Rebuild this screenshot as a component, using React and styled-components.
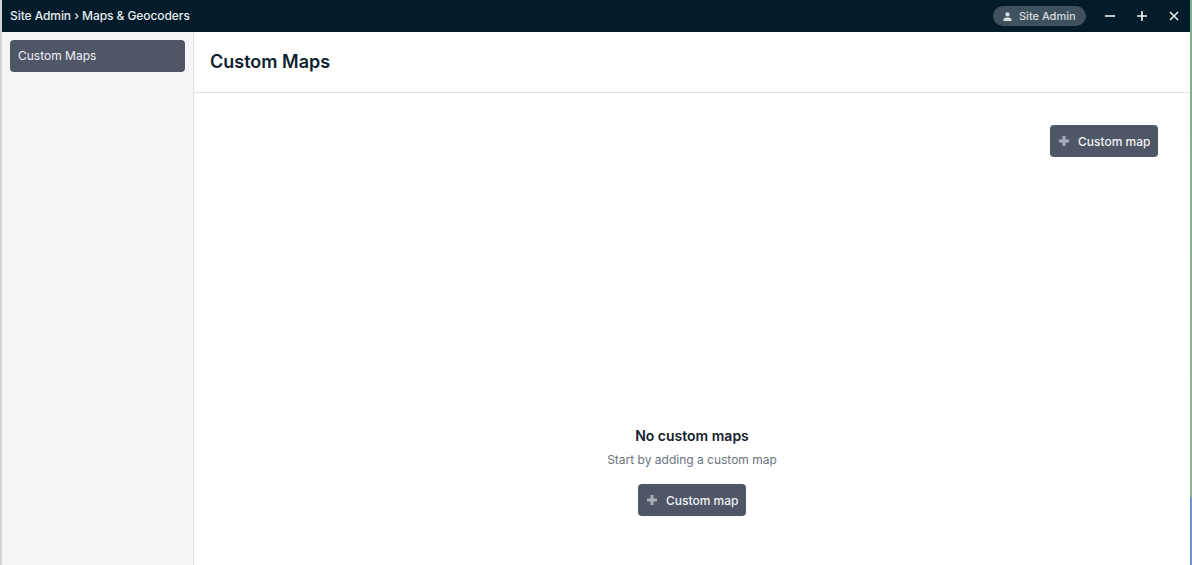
import React from "react";
import styled, { createGlobalStyle } from "styled-components";

const GlobalStyle = createGlobalStyle`
	html, body {
		margin: 0;
		padding: 0;
		height: 100%;
		overflow: hidden;
		background: #7fae8c;
	}
	* {
		box-sizing: border-box;
	}
	#root {
		height: 100%;
	}
`;

//  //  //  STYLED-COMPONENTS   //  //  //

const Desktop = styled.div`
	width: 1192px;
	height: 565px;
	display: flex;
	font-family: Inter, "Liberation Sans", sans-serif;
	background: linear-gradient(180deg, #7fae8c 0%, #8fb596 88%, #6f93d0 88%, #6f93d0 100%);
`;

const DesktopEdge = styled.div`
	width: 2px;
	background: #d4d4d6;
`;

const Window = styled.div`
	width: 1188px;
	display: flex;
	flex-direction: column;
	background: #fff;
`;

const TitleBar = styled.header`
	height: 32px;
	flex: none;
	display: flex;
	align-items: center;
	justify-content: space-between;
	padding: 0 0 0 8px;
	background: #031c2b;
	color: #e9ecef;
`;

const Breadcrumb = styled.div`
	font-size: 12px;
	font-weight: 500;
	letter-spacing: -0.07px;
	padding-bottom: 1px;
`;

const TitleActions = styled.div`
	display: flex;
	align-items: center;
`;

const UserPill = styled.div`
	width: 93px;
	height: 20px;
	margin-right: 8px;
	display: flex;
	align-items: center;
	gap: 7px;
	padding-left: 10px;
	border-radius: 10px;
	background: #3f515c;
	color: #d8dde0;
	font-size: 11px;
	font-weight: 500;
`;

const WindowButton = styled.button`
	width: 32px;
	height: 24px;
	padding: 0;
	display: flex;
	align-items: center;
	justify-content: center;
	border: 0;
	background: none;
	color: #f1f3f5;
`;

const Body = styled.div`
	flex: 1;
	min-height: 0;
	display: flex;
`;

const Sidebar = styled.nav`
	width: 192px;
	flex: none;
	padding: 8px;
	background: #f5f5f8;
	border-right: 1px solid #e2e4ea;
`;

const SidebarItem = styled.div`
	width: 175px;
	height: 32px;
	display: flex;
	align-items: center;
	padding: 0 0 1px 8px;
	border-radius: 4px;
	background: #4f5766;
	color: #eef0f3;
	font-size: 12px;
`;

const Main = styled.main`
	flex: 1;
	min-width: 0;
	display: flex;
	flex-direction: column;
`;

const PageHeader = styled.div`
	height: 61px;
	flex: none;
	display: flex;
	align-items: center;
	padding: 0 16px 2px;
	border-bottom: 1px solid #dfe2e8;
`;

const PageTitle = styled.h1`
	margin: 0;
	color: #0f1f30;
	font-size: 18px;
	font-weight: 600;
`;

const Toolbar = styled.div`
	display: flex;
	justify-content: flex-end;
	padding: 32px 32px 0 0;
`;

const EmptyState = styled.section`
	flex: 1;
	display: flex;
	flex-direction: column;
	align-items: center;
	justify-content: flex-end;
	padding-bottom: 49px;
`;

const EmptyTitle = styled.h2`
	margin: 0;
	color: #14202f;
	font-size: 14px;
	line-height: 20px;
	font-weight: 600;
`;

const EmptyText = styled.p`
	margin: 5px 0 15px;
	color: #6b7280;
	font-size: 12px;
	line-height: 18px;
`;

const Button = styled.button`
	height: 32px;
	width: 108px;
	display: flex;
	align-items: center;
	gap: 8px;
	padding: 0 8px;
	border: 0;
	border-radius: 4px;
	background: #4f5766;
	color: #f1f3f5;
	font-family: inherit;
	font-size: 12px;
	font-weight: 500;
	white-space: nowrap;
`;

const PlusMark = styled.svg`
	width: 12px;
	height: 12px;
	flex: none;
	color: #a9afb8;
`;

//  //  //  FUNCTION    //  //  //

function AddButton() {
	return (
		<Button>
			<PlusMark viewBox="0 0 12 12">
				<path d="M6 1v10M1 6h10" stroke="currentColor" strokeWidth="3" fill="none" />
			</PlusMark>
			Custom map
		</Button>
	);
}

export default function App() {
	return (
		<>
			<GlobalStyle />
			<Desktop>
				<DesktopEdge />
				<Window>
					<TitleBar>
						<Breadcrumb>Site Admin › Maps &amp; Geocoders</Breadcrumb>
						<TitleActions>
							<UserPill>
								<svg width="9" height="9" viewBox="0 0 9 9" fill="currentColor">
									<circle cx="4.5" cy="2.4" r="2.1" />
									<path d="M.5 9V7.6C.5 6 2.2 5.4 4.5 5.4s4 .6 4 2.2V9z" />
								</svg>
								Site Admin
							</UserPill>
							<WindowButton aria-label="Minimize">
								<svg width="10" height="10" viewBox="0 0 10 10">
									<path d="M0 5h10" stroke="currentColor" strokeWidth="1.6" />
								</svg>
							</WindowButton>
							<WindowButton aria-label="Maximize">
								<svg width="10" height="10" viewBox="0 0 10 10">
									<path d="M5 0v10M0 5h10" stroke="currentColor" strokeWidth="1.6" />
								</svg>
							</WindowButton>
							<WindowButton aria-label="Close">
								<svg width="10" height="10" viewBox="0 0 10 10">
									<path d="M1 1l8 8M9 1l-8 8" stroke="currentColor" strokeWidth="1.5" />
								</svg>
							</WindowButton>
						</TitleActions>
					</TitleBar>
					<Body>
						<Sidebar>
							<SidebarItem>Custom Maps</SidebarItem>
						</Sidebar>
						<Main>
							<PageHeader>
								<PageTitle>Custom Maps</PageTitle>
							</PageHeader>
							<Toolbar>
								<AddButton />
							</Toolbar>
							<EmptyState>
								<EmptyTitle>No custom maps</EmptyTitle>
								<EmptyText>Start by adding a custom map</EmptyText>
								<AddButton />
							</EmptyState>
						</Main>
					</Body>
				</Window>
			</Desktop>
		</>
	);
}
